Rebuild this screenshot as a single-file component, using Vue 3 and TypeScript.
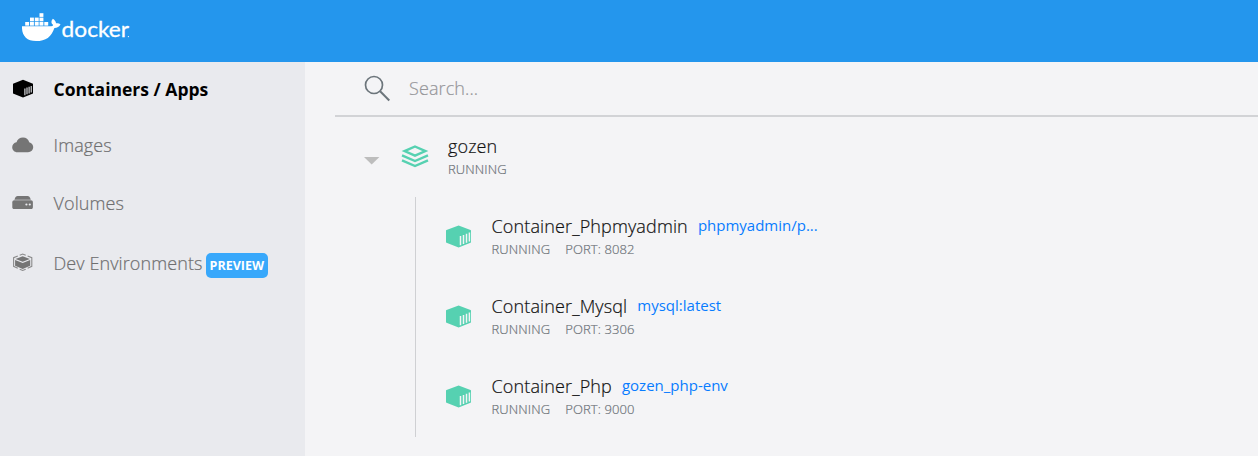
<script setup lang="ts">
interface NavItem {
  id: string
  label: string
  badge?: string
}

interface Container {
  name: string
  image: string
  status: string
  port: number
}

const navItems: NavItem[] = [
  { id: 'containers', label: 'Containers / Apps' },
  { id: 'images', label: 'Images' },
  { id: 'volumes', label: 'Volumes' },
  { id: 'dev', label: 'Dev Environments', badge: 'PREVIEW' },
]

const containers: Container[] = [
  { name: 'Container_Phpmyadmin', image: 'phpmyadmin/p...', status: 'RUNNING', port: 8082 },
  { name: 'Container_Mysql', image: 'mysql:latest', status: 'RUNNING', port: 3306 },
  { name: 'Container_Php', image: 'gozen_php-env', status: 'RUNNING', port: 9000 },
]
</script>

<template>
  <div class="window">
    <header class="topbar">
      <svg class="logo" width="112" height="32" viewBox="0 0 112 32">
        <g fill="#fff">
          <path d="M0 14.2H27.6C30.4 14.2 31.2 13.7 31.1 12.8C28.9 11.2 28.9 9 30.9 6.8C32.9 8.1 33.9 9.8 34 11.3C35.7 10.9 37.1 11.2 38.5 12.2C37.3 14.7 35.3 15.9 32.4 15.9C29.4 24.8 24 29 14 29C4.6 29 -.4 23.6 0 14.2Z" />
          <rect x="3.2" y="10" width="3.9" height="3.6" />
          <rect x="8" y="10" width="3.9" height="3.6" />
          <rect x="12.8" y="10" width="3.9" height="3.6" />
          <rect x="17.5" y="10" width="3.9" height="3.6" />
          <rect x="22.3" y="10" width="3.9" height="3.6" />
          <rect x="8" y="5.6" width="3.9" height="3.7" />
          <rect x="12.8" y="5.6" width="3.9" height="3.7" />
          <rect x="17.5" y="5.6" width="3.9" height="3.7" />
          <rect x="17.5" y="1.2" width="3.9" height="3.7" />
          <circle cx="106.4" cy="24.6" r=".6" />
        </g>
        <text class="wordmark" x="39.6" y="25" textLength="67.5" lengthAdjust="spacingAndGlyphs">docker</text>
      </svg>
    </header>

    <div class="body">
      <nav class="sidebar">
        <a v-for="(item, i) in navItems" :key="item.id" class="nav-item" :class="{ active: i === 0 }">
          <svg v-if="item.id === 'containers'" class="nav-icon" width="22" height="20" viewBox="0 0 22 20">
            <path d="M11 .8L21 4.7V14.6L11 18.6L1 14.6V4.7Z" fill="#000" />
            <path d="M12.9 9.4V16.2M15 8.6V15.3M17.1 7.8V14.4M19.2 7V13.5" stroke="#e9eaee" stroke-width="1.1" />
          </svg>
          <svg v-else-if="item.id === 'images'" class="nav-icon" width="22" height="20" viewBox="0 0 22 20">
            <path d="M5.4 17.2C2.4 17.2 .2 15 .2 12.2C.2 9.6 2 7.6 4.5 7.2C5.3 4.4 7.9 2.5 11 2.5C14.1 2.5 16.5 4.3 17.2 7.2C19.5 7.8 21.2 9.7 21.2 12.1C21.2 15 19 17.2 16 17.2Z" fill="#757575" />
          </svg>
          <svg v-else-if="item.id === 'volumes'" class="nav-icon" width="22" height="20" viewBox="0 0 22 20">
            <path d="M5.7 3H15.6C17 3 17.8 3.7 18.8 6.7H2.4C3.4 3.7 4.2 3 5.7 3Z" fill="#757575" />
            <path d="M2.3 7.3H18.9C20.2 7.3 20.9 8.2 20.9 9.5V14.2C20.9 15.4 20.3 16 19.1 16H2.1C.9 16 .3 15.4 .3 14.2V9.5C.3 8.2 1 7.3 2.3 7.3Z" fill="#757575" />
            <circle cx="14.4" cy="11.5" r="1.1" fill="#e9eaee" />
            <circle cx="17.8" cy="11.5" r="1.1" fill="#e9eaee" />
          </svg>
          <svg v-else class="nav-icon" width="22" height="20" viewBox="0 0 22 20">
            <path d="M10.7 3.2L17.9 6L10.7 8.7L3.5 6Z" fill="#757575" />
            <path d="M3.1 6.9L10.7 9.9L18.2 6.9V12.7L10.7 15.9L3.1 12.7Z" fill="#757575" />
            <path d="M7.7 2.3L10.7 1L13.7 2.3M5.8 2.9L1.6 4.7V13.3L5.8 15.2M15.6 2.9L19.8 4.7V13.3L15.6 15.2M7.7 16.2L10.7 17.5L13.7 16.2" fill="none" stroke="#8b8b8b" stroke-width="1.1" />
          </svg>
          <span class="nav-label">{{ item.label }}</span>
          <span v-if="item.badge" class="badge">{{ item.badge }}</span>
        </a>
      </nav>

      <main class="content">
        <div class="search">
          <svg width="28" height="28" viewBox="0 0 28 28" fill="none" stroke="#6c757b">
            <circle cx="10" cy="10" r="8.5" stroke-width="1.7" />
            <path d="M16.1 16.2L25.3 25.5" stroke-width="2" />
          </svg>
          <span class="placeholder">Search...</span>
        </div>

        <section class="group">
          <svg class="caret" width="16" height="8" viewBox="0 0 16 8"><path d="M0 0H15.4L7.7 7.6Z" fill="#bdbdbd" /></svg>
          <svg class="stack" width="28" height="26" viewBox="0 0 28 26" fill="none" stroke="#56d1b1" stroke-width="2.4">
            <path d="M14 2.5L24.4 7.1L14 11.7L3.6 7.1Z" stroke-linejoin="miter" />
            <path d="M1 11.4L14 17L27 11.4M1 16.3L14 22L27 16.3" />
          </svg>
          <div class="info">
            <div class="name">gozen</div>
            <div class="meta"><span>RUNNING</span></div>
          </div>
        </section>

        <ul class="containers">
          <li v-for="c in containers" :key="c.name" class="container-row">
            <svg class="box" width="26" height="24" viewBox="0 0 26 24">
              <path d="M12.6 .4L24.5 5Q25 5.2 25 5.8V17Q25 17.6 24.5 17.8L12.6 22.6L.5 17.8Q0 17.6 0 17V5.8Q0 5.2 .5 5Z" fill="#56d1b1" />
              <path d="M14.5 11.1V20.2M17.5 9.9V19M20.5 8.7V17.8M23.4 7.6V16.6" stroke="#f4f4f6" stroke-width="1.5" />
            </svg>
            <div class="info">
              <div class="title-line">
                <span class="name">{{ c.name }}</span>
                <a class="image">{{ c.image }}</a>
              </div>
              <div class="meta">
                <span>{{ c.status }}</span>
                <span>PORT: {{ c.port }}</span>
              </div>
            </div>
          </li>
        </ul>
      </main>
    </div>
  </div>
</template>

<style>
body {
  margin: 0;
  overflow: hidden;
}
</style>

<style scoped>
.window {
  display: flex;
  flex-direction: column;
  height: 456px;
  font-family: "Open Sans", "Noto Sans", sans-serif;
  font-weight: 300;
  background: #f4f4f6;
}
.topbar {
  flex: 0 0 62px;
  box-sizing: border-box;
  padding: 12px 0 0 22px;
  background: #2496ed;
}
.logo {
  display: block;
}
.wordmark {
  fill: #fff;
  font-family: Lato, sans-serif;
  font-size: 22px;
  font-weight: 400;
  stroke: #fff;
  stroke-width: 0.3px;
}
.body {
  display: flex;
  flex: 1;
  min-height: 0;
}
.sidebar {
  display: grid;
  grid-template-rows: 55px 56px 60px 60px;
  align-content: start;
  flex: 0 0 305px;
  background: #e9eaee;
}
.nav-item {
  display: flex;
  align-items: center;
  padding-left: 12px;
  font-size: 18px;
  line-height: 24px;
  letter-spacing: 0.1px;
  color: #6f6f70;
  white-space: nowrap;
}
.nav-label,
.placeholder,
.name,
.meta {
  -webkit-text-stroke: 0.2px currentColor;
}
.nav-icon {
  flex: none;
  margin-right: 19.5px;
}
.nav-item.active {
  padding-bottom: 1px;
  color: #000;
  font-size: 17.5px;
  font-weight: 700;
  letter-spacing: 0;
}
.active .nav-label {
  -webkit-text-stroke: 0;
}
.badge {
  margin: 4px 0 0 3px;
  padding: 0 4px;
  border-radius: 5px;
  background: #38a8fb;
  color: #fff;
  font-size: 12.5px;
  font-weight: 700;
  line-height: 25px;
  letter-spacing: 0;
}
.content {
  flex: 1;
  min-width: 0;
  padding-left: 30px;
}
.search {
  display: flex;
  align-items: center;
  gap: 17px;
  box-sizing: border-box;
  height: 55px;
  padding-left: 29px;
  border-bottom: 2px solid #d2d3d6;
}
.placeholder {
  margin-top: -2px;
  font-size: 18px;
  letter-spacing: 0.1px;
  color: #96969a;
}
.group {
  display: flex;
  align-items: center;
  height: 80px;
  padding-left: 29px;
}
.caret {
  margin: 8px 21px 0 0;
}
.stack {
  margin-right: 19px;
}
.name {
  font-size: 18px;
  line-height: 24px;
  letter-spacing: 0.13px;
  color: #111;
}
.meta {
  display: flex;
  gap: 15px;
  font-size: 13px;
  line-height: 22px;
  letter-spacing: 0.12px;
  color: #6c7278;
}
.containers {
  list-style: none;
  margin: 0 0 0 80px;
  padding: 0;
  border-left: 1px solid #cfd0d3;
}
.container-row {
  display: flex;
  align-items: center;
  height: 80px;
  padding-left: 30px;
}
.box {
  margin-right: 19.5px;
}
.title-line {
  display: flex;
  gap: 10px;
}
.image {
  white-space: nowrap;
  font-size: 15px;
  line-height: 23px;
  font-weight: 400;
  color: #087cff;
}
</style>
